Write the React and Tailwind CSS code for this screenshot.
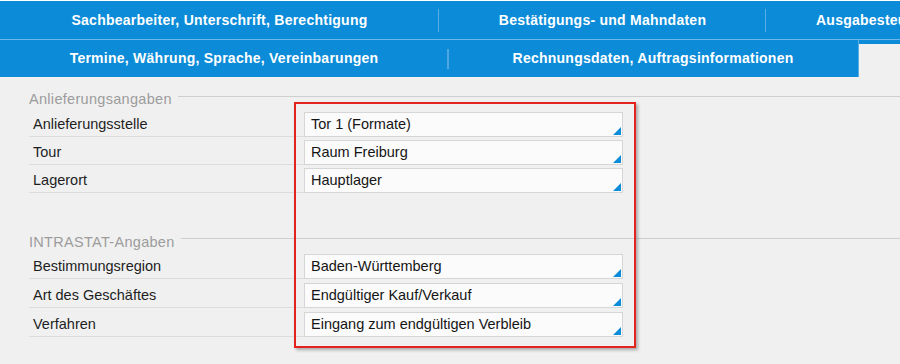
import React from "react";

const FONT = { fontFamily: '"Liberation Sans", Arial, sans-serif' };

function Field({ label, value }) {
  return (
    <div className="flex h-[25px]">
      <div className="w-[275px] h-[25px] border-b border-[#dcdcdc] pl-[4px] flex items-center pt-[2px] text-[14.5px] text-[#1e1e1e]">
        {label}
      </div>
      <div className="relative w-[319px] h-[25px] bg-[#fbfbfb] border border-[#d6d6d6] pl-[6px] flex items-center text-[14.5px] text-[#151515]">
        {value}
        <div className="absolute right-[1px] bottom-[1px] w-[8px] h-[8px] bg-[#0b8bd8] [clip-path:polygon(100%_0,100%_100%,0_100%)]" />
      </div>
    </div>
  );
}

function Header({ text, lineTop = "mt-[5px]" }) {
  return (
    <div className="flex h-[16px]">
      <div className="text-[14.5px] leading-[16px] tracking-[0.3px] text-[#9c9c9c] whitespace-nowrap pr-[6px] pl-0">
        {text}
      </div>
      <div className={`flex-1 h-px bg-[#cfcfcf] ${lineTop}`} />
    </div>
  );
}

function Tab({ w, text, sep, sepClass, justify = "justify-center" }) {
  return (
    <div className={`relative h-full flex items-center shrink-0 ${justify} ${w}`}>
      <span className="text-white font-bold text-[14px] tracking-[0.25px] whitespace-nowrap">{text}</span>
      {sep && <div className={sepClass} />}
    </div>
  );
}

export default function App() {
  return (
    <div style={FONT} className="relative w-[900px] h-[364px] bg-[#f0f0f0] overflow-hidden">
      {/* Tabs */}
      <div className="border-t border-white">
        <div className="flex h-[38px] bg-[#0b8bd8] overflow-hidden">
          <Tab w="w-[439px]" text="Sachbearbeiter, Unterschrift, Berechtigung" sep sepClass="absolute right-0 top-[8px] h-[23px] w-px bg-[#5aaee6]" />
          <Tab w="w-[327px]" text="Bestätigungs- und Mahndaten" sep sepClass="absolute right-0 top-[8px] h-[23px] w-px bg-[#5aaee6]" />
          <Tab w="w-[327px] pl-[50px]" justify="justify-start" text="Ausgabesteuerung" />
        </div>
        <div className="h-px bg-[#6cb9ec]" />
        <div className="flex h-[37px] bg-[#0b8bd8]">
          <Tab w="w-[448px]" text="Termine, Währung, Sprache, Vereinbarungen" sep sepClass="absolute right-[-1px] top-[9px] h-[20px] w-[2px] bg-[#4ea6e2]" />
          <Tab w="w-[411px] border-r border-[#5aaee6]" text="Rechnungsdaten, Auftragsinformationen" />
          <div className="flex-1 mt-[4px] bg-[#f0f0f0]" />
        </div>
      </div>

      {/* Content */}
      <div className="pl-[29px] pt-[14px]">
        <Header text="Anlieferungsangaben" />
        <div className="mt-[5px] flex flex-col gap-[3px]">
          <Field label="Anlieferungsstelle" value="Tor 1 (Formate)" />
          <Field label="Tour" value="Raum Freiburg" />
          <Field label="Lagerort" value="Hauptlager" />
        </div>

        <div className="mt-[41px]">
          <Header text="INTRASTAT-Angaben" lineTop="mt-[4px]" />
        </div>
        <div className="mt-[4px] flex flex-col gap-[4px]">
          <Field label="Bestimmungsregion" value="Baden-Württemberg" />
          <Field label="Art des Geschäftes" value="Endgültiger Kauf/Verkauf" />
          <Field label="Verfahren" value="Eingang zum endgültigen Verbleib" />
        </div>
      </div>

      {/* Red highlight annotation */}
      <div className="absolute left-[294px] top-[102px] w-[342px] h-[246px] border-2 border-[#e3231d] shadow-[2px_2px_3px_rgba(0,0,0,0.3)] pointer-events-none" />
    </div>
  );
}
